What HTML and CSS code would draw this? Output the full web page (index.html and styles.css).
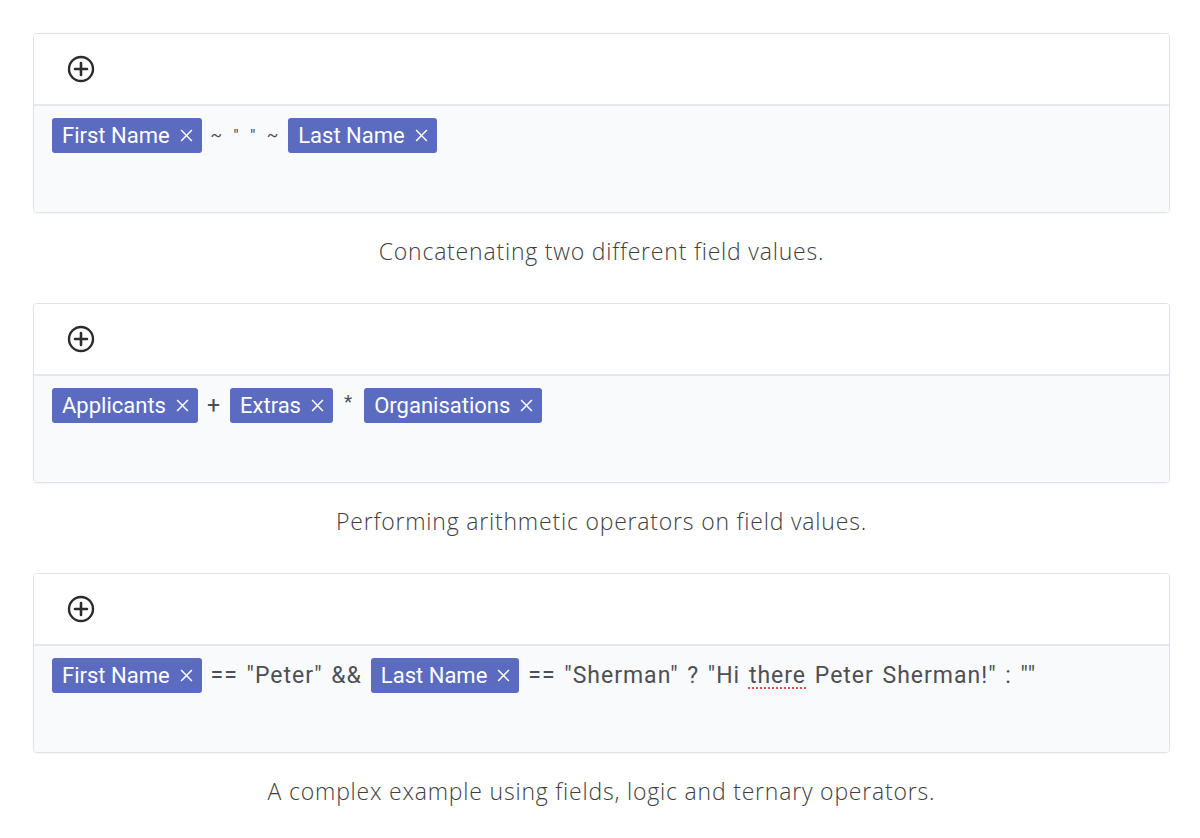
FILE: index.html
```html
<!DOCTYPE html>
<html lang="en">
<head>
    <meta charset="UTF-8">
    <title>Expression examples</title>
    <link rel="stylesheet" href="styles.css">
</head>
<body>
    <div class="examples">
        <figure class="example">
            <div class="editor">
                <div class="editor-head">
                    <svg class="add-icon" viewBox="0 0 28 28" width="28" height="28">
                        <circle cx="14" cy="14" r="12" fill="none" stroke="#2b2b2b" stroke-width="2.4"/>
                        <path d="M14 8v12M8 14h12" stroke="#2b2b2b" stroke-width="2.6" stroke-linecap="round"/>
                    </svg>
                </div>
                <div class="editor-body">
                    <span class="tag">First Name <svg class="tag-x" viewBox="0 0 12 12"><path d="M1 1l10 10M11 1L1 11"/></svg></span>
                    <span class="op op-small">~ " " ~</span>
                    <span class="tag">Last Name <svg class="tag-x" viewBox="0 0 12 12"><path d="M1 1l10 10M11 1L1 11"/></svg></span>
                </div>
            </div>
            <figcaption>Concatenating two different field values.</figcaption>
        </figure>

        <figure class="example">
            <div class="editor">
                <div class="editor-head">
                    <svg class="add-icon" viewBox="0 0 28 28" width="28" height="28">
                        <circle cx="14" cy="14" r="12" fill="none" stroke="#2b2b2b" stroke-width="2.4"/>
                        <path d="M14 8v12M8 14h12" stroke="#2b2b2b" stroke-width="2.6" stroke-linecap="round"/>
                    </svg>
                </div>
                <div class="editor-body">
                    <span class="tag">Applicants <svg class="tag-x" viewBox="0 0 12 12"><path d="M1 1l10 10M11 1L1 11"/></svg></span>
                    <span class="op">+</span>
                    <span class="tag">Extras <svg class="tag-x" viewBox="0 0 12 12"><path d="M1 1l10 10M11 1L1 11"/></svg></span>
                    <span class="op op-star">*</span>
                    <span class="tag">Organisations <svg class="tag-x" viewBox="0 0 12 12"><path d="M1 1l10 10M11 1L1 11"/></svg></span>
                </div>
            </div>
            <figcaption>Performing arithmetic operators on field values.</figcaption>
        </figure>

        <figure class="example">
            <div class="editor">
                <div class="editor-head">
                    <svg class="add-icon" viewBox="0 0 28 28" width="28" height="28">
                        <circle cx="14" cy="14" r="12" fill="none" stroke="#2b2b2b" stroke-width="2.4"/>
                        <path d="M14 8v12M8 14h12" stroke="#2b2b2b" stroke-width="2.6" stroke-linecap="round"/>
                    </svg>
                </div>
                <div class="editor-body">
                    <span class="tag">First Name <svg class="tag-x" viewBox="0 0 12 12"><path d="M1 1l10 10M11 1L1 11"/></svg></span>
                    <span class="op">== "Peter" &amp;&amp;</span>
                    <span class="tag">Last Name <svg class="tag-x" viewBox="0 0 12 12"><path d="M1 1l10 10M11 1L1 11"/></svg></span>
                    <span class="op">== "Sherman" ? "Hi <span class="misspelt">there</span> Peter Sherman!" : ""</span>
                </div>
            </div>
            <figcaption>A complex example using fields, logic and ternary operators.</figcaption>
        </figure>
    </div>
</body>
</html>
```

FILE: styles.css
```css
body {
    margin: 0;
    background-color: #fff;
    font-family: Roboto, "Liberation Sans", Arial, sans-serif;
}
.examples {
    padding: 33px 30px 0 33px;
}
.example {
    margin: 0;
}
.editor {
    border: 1px solid #dfe2e8;
    border-radius: 4px;
    overflow: hidden;
    box-shadow: 0 1px 2px rgba(0, 0, 0, 0.04);
}
.editor-head {
    height: 70px;
    display: flex;
    align-items: center;
    padding-left: 33px;
    background-color: #fff;
    border-bottom: 2px solid #e6e8ed;
}
.editor-body {
    height: 94px;
    padding: 12px 18px 0;
    background-color: #f9fafc;
    display: flex;
    align-items: flex-start;
    gap: 9px;
}
.tag {
    display: inline-flex;
    align-items: center;
    height: 35px;
    padding: 0 9px 0 10px;
    background-color: #5a6bc0;
    color: #fff;
    font-size: 22px;
    border-radius: 3px;
    gap: 10px;
    white-space: nowrap;
}
.tag-x {
    width: 13px;
    height: 13px;
    stroke: #fff;
    stroke-width: 1.4;
    fill: none;
}
.op {
    line-height: 35px;
    font-size: 23px;
    letter-spacing: 1px;
    word-spacing: 2px;
    color: #4d4f55;
    white-space: nowrap;
}
.op-small {
    font-size: 17px;
    word-spacing: 5px;
}
.op-star {
    font-size: 19px;
    line-height: 28px;
    padding: 0 2px;
}
.misspelt {
    text-decoration: underline dotted #e0504a;
    text-decoration-thickness: 2px;
    text-underline-offset: 4px;
}
figcaption {
    padding: 25px 0 39px;
    line-height: 26px;
    text-align: center;
    font-family: "Open Sans", Lato, sans-serif;
    font-weight: 300;
    font-size: 23px;
    letter-spacing: 0.8px;
    color: #3e3e3e;
}
```
